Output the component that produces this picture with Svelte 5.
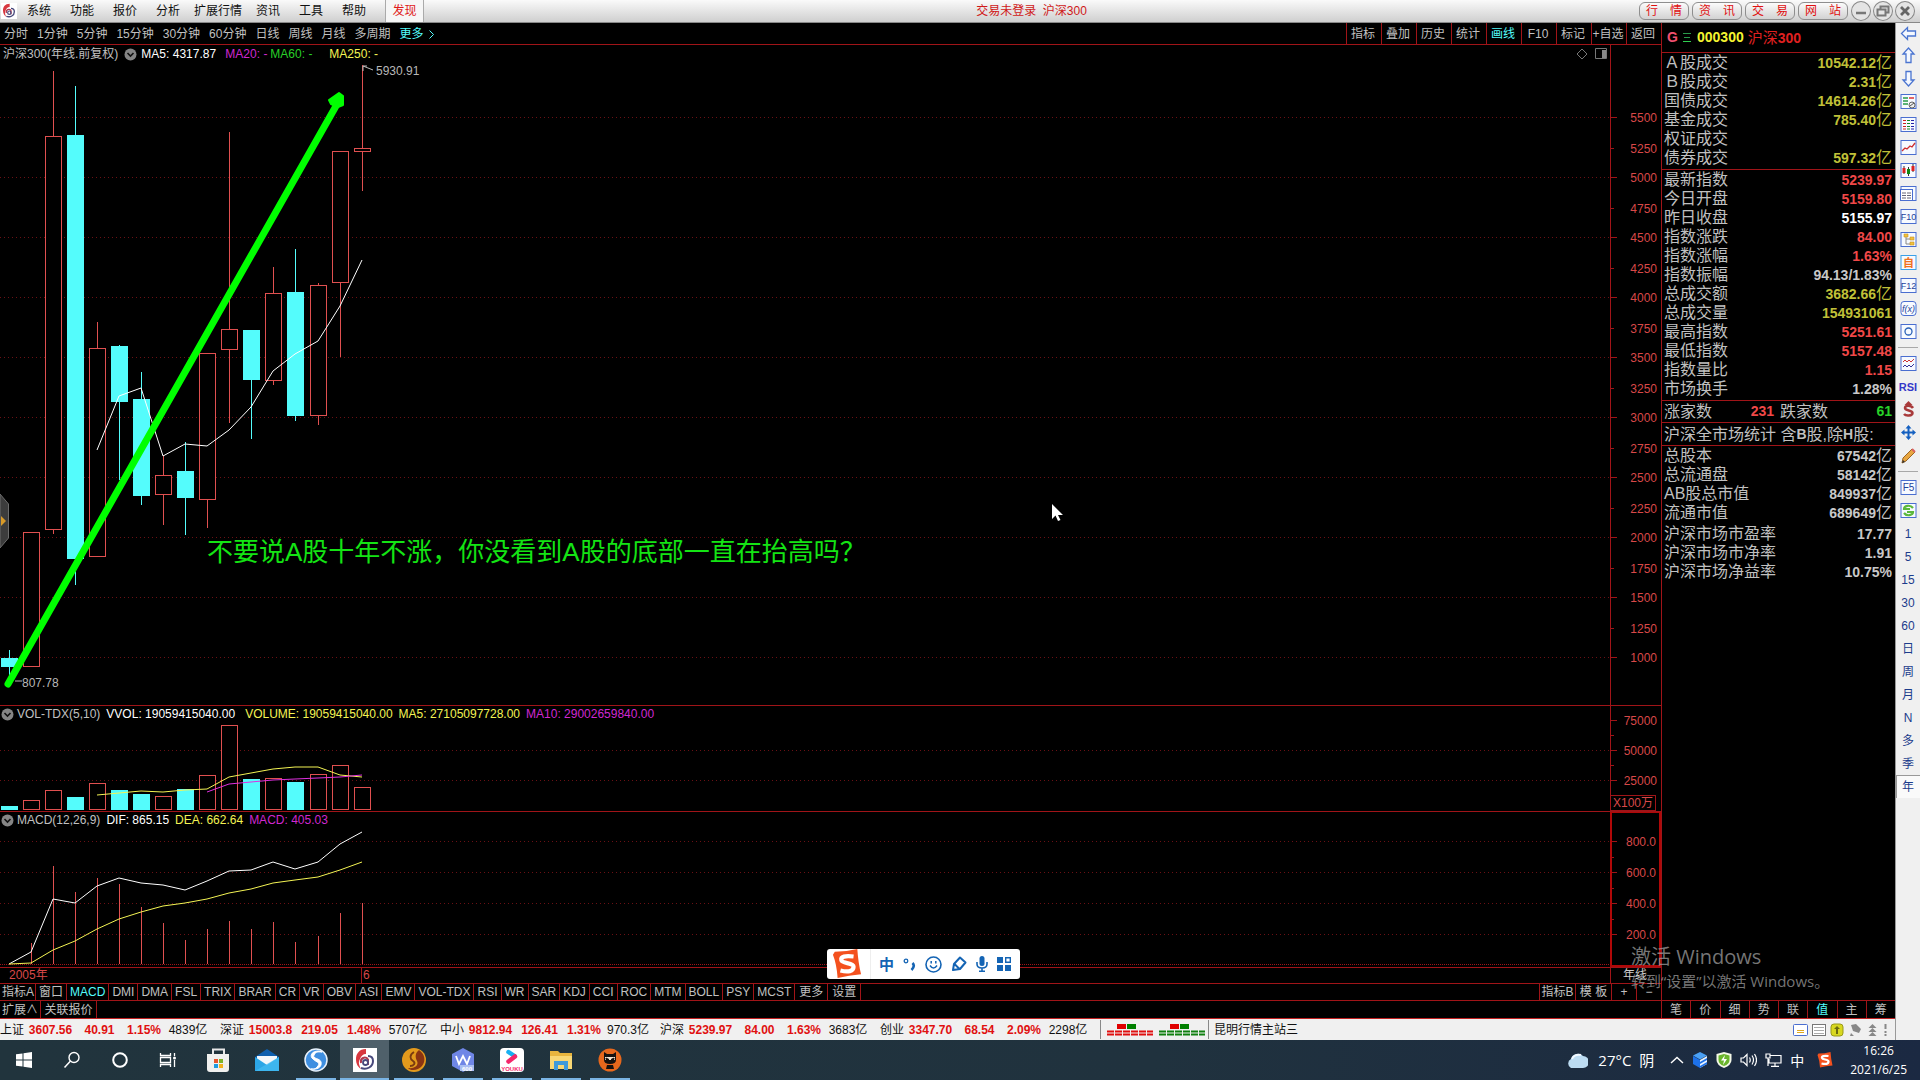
<script>
  const menus = ['系统', '功能', '报价', '分析', '扩展行情', '资讯', '工具', '帮助'];
  const links = ['行　情', '资　讯', '交　易', '网　站'];
  const periods = ['分时', '1分钟', '5分钟', '15分钟', '30分钟', '60分钟', '日线', '周线', '月线', '多周期'];
  const tools = ['指标', '叠加', '历史', '统计', '画线', 'F10', '标记', '+自选', '返回'];
  const indicators = ['指标A', '窗口', 'MACD', 'DMI', 'DMA', 'FSL', 'TRIX', 'BRAR', 'CR', 'VR', 'OBV', 'ASI', 'EMV', 'VOL-TDX', 'RSI', 'WR', 'SAR', 'KDJ', 'CCI', 'ROC', 'MTM', 'BOLL', 'PSY', 'MCST', '更多', '设置'];
  const panelTabs = ['笔', '价', '细', '势', '联', '值', '主', '筹'];

  const xs = [9, 31, 53, 75, 97, 119, 141, 163, 185, 207, 229, 251, 273, 295, 318, 340, 362];
  // up, high, body top, body bottom, low
  const candles = [
    [0, 587, 595, 604, 621], [1, 469, 469, 604, 604], [1, 8, 73, 467, 471], [0, 23, 72, 496, 522],
    [1, 259, 285, 494, 494], [0, 282, 283, 339, 417], [0, 309, 336, 433, 442], [1, 392, 412, 432, 462],
    [0, 379, 408, 435, 472], [1, 290, 290, 437, 465], [1, 69, 266, 287, 360], [0, 267, 267, 317, 376],
    [1, 204, 230, 318, 322], [0, 186, 229, 353, 358], [1, 220, 222, 353, 362], [1, 88, 88, 220, 294], [1, 2, 85, 89, 128]
  ];
  const volTops = [84, 78, 68, 75, 61, 68, 72, 74, 67, 53, 3, 57, 56, 60, 52, 43, 65];
  const macdTops = [136, 115, 38, 64, 50, 56, 79, 95, 112, 101, 93, 101, 94, 114, 108, 85, 75];

  const line = (ys) => ys.map((y, i) => `${xs[xs.length - ys.length + i]},${y}`).join(' ');
  const priceMa = line([387, 333, 325, 393, 381, 383, 367, 344, 308, 291, 278, 243, 197]);
  const volMa5 = line([73, 71, 69, 70, 68, 67, 55, 51, 47, 45, 45, 53, 55]);
  const volMa10 = line([70, 62, 60, 58, 57, 56, 55, 53]);
  const dif = line([136, 124, 71, 75, 58, 50, 55, 57, 62, 53, 43, 42, 34, 41, 34, 16, 4]);
  const dea = line([136, 135, 122, 113, 101, 91, 84, 78, 75, 71, 65, 61, 55, 52, 49, 42, 34]);

  const priceTicks = Array.from({ length: 19 }, (_, i) => ({ v: 5500 - i * 250, y: 72 + Math.floor(i * 30.05) + (i % 2) }));
  const priceGrid = Array.from({ length: 10 }, (_, i) => 54 + Math.floor(i * 60.1));

  const turnover = [['Ａ股成交', '10542.12', '亿'], ['Ｂ股成交', '2.31', '亿'], ['国债成交', '14614.26', '亿'], ['基金成交', '785.40', '亿'], ['权证成交', '', ''], ['债券成交', '597.32', '亿']]
    .map((r) => [...r, 'yellow']);
  const quote = [
    ['最新指数', '5239.97', '', 'red'], ['今日开盘', '5159.80', '', 'red'], ['昨日收盘', '5155.97', '', 'white'],
    ['指数涨跌', '84.00', '', 'red'], ['指数涨幅', '1.63%', '', 'red'], ['指数振幅', '94.13/1.83%', '', 'grey'],
    ['总成交额', '3682.66', '亿', 'yellow'], ['总成交量', '154931061', '', 'yellow'], ['最高指数', '5251.61', '', 'red'],
    ['最低指数', '5157.48', '', 'red'], ['指数量比', '1.15', '', 'red'], ['市场换手', '1.28%', '', 'grey']
  ];
  const market = [['总股本', '67542', '亿', 'grey'], ['总流通盘', '58142', '亿', 'grey'], ['AB股总市值', '849937', '亿', 'grey'], ['流通市值', '689649', '亿', 'grey']];
  const ratios = [['沪深市场市盈率', '17.77', '', 'grey'], ['沪深市场市净率', '1.91', '', 'grey'], ['沪深市场净益率', '10.75%', '', 'grey']];

  const side = ['left', 'up', 'down', 'edit', 'list', 'trend', 'kline', 'windows', 'F10', 'tree', '自', 'F12', 'fx', 'circle', '-', 'waves', 'RSI', 'dollar', 'move', 'pencil', '-', 'F5', 'refresh', '1', '5', '15', '30', '60', '日', '周', '月', 'N', '多', '季', '年'];
  const drawn = ['left', 'up', 'down', 'edit', 'list', 'trend', 'kline', 'windows', 'F10', 'tree', '自', 'F12', 'fx', 'circle', 'waves', 'dollar', 'move', 'pencil', 'F5', 'refresh'];

  const indices = [
    ['上证', '3607.56', '40.91', '1.15%', '4839亿'], ['深证', '15003.8', '219.05', '1.48%', '5707亿'],
    ['中小', '9812.94', '126.41', '1.31%', '970.3亿'], ['沪深', '5239.97', '84.00', '1.63%', '3683亿'],
    ['创业', '3347.70', '68.54', '2.09%', '2298亿']
  ];
  const apps = ['store', 'mail', 'sogou', 'tdx', 'flame', 'wps', 'youku', 'folder', 'ninja'];
</script>

{#snippet tdxLogo(size)}
  <svg width={size} height={size} viewBox="0 0 24 24" aria-hidden="true">
    <rect width="24" height="24" fill="#fff" />
    <path d="M13 1C6 1 3 6 3 11c0 5 2 8 5 10-2-4-3-7-1-10 1-3 3-5 6-5z" fill="#d8373f" />
    <path d="M8 20c6 2 12-1 12-7 0-3-2-5-5-5" fill="none" stroke="#48497c" stroke-width="2" />
    <path d="M8 15c-1-5 4-7 7-4M15 11v6" fill="none" stroke="#b03a50" stroke-width="2" />
    <circle cx="12.500" cy="14.500" r="2.500" fill="none" stroke="#48497c" stroke-width="1.800" />
  </svg>
{/snippet}

{#snippet sogouS(size)}
  <svg width={size} height={size} viewBox="0 0 32 32" aria-hidden="true">
    <path d="M3 3 Q15 3 27 0 Q28 15 31 27 Q18 28 6 31 Q5 16 1 6 Z" fill="#f4511e" />
    <path d="M23 8C14 7 9 8 10 12s13 2 13 7-6 6-14 4" fill="none" stroke="#fff" stroke-width="4.5" />
  </svg>
{/snippet}

{#snippet chevron()}
  <svg class="chev" width="13" height="13" viewBox="0 0 13 13" aria-hidden="true">
    <circle cx="6.5" cy="6.5" r="6" fill="#858585" />
    <path d="M3.5 5l3 3 3-3" fill="none" stroke="#111" stroke-width="1.6" />
  </svg>
{/snippet}

{#snippet rows(list)}
  <table>
    <tbody>
      {#each list as [label, value, unit, tone]}
        <tr><th scope="row">{label}</th><td class={tone}><b>{value}</b>{unit}</td></tr>
      {/each}
    </tbody>
  </table>
{/snippet}

{#snippet sideIcon(n)}
  <svg width="17" height="17" viewBox="0 0 17 17" aria-hidden="true">
    {#if n === 'left'}
      <path d="M1.5 8.500L7.500 2.500V6H15.500V11H7.500V14.500Z" class="arrow" />
    {:else if n === 'up'}
      <path d="M8.500 1L14 7H11V15.500H6V7H3Z" class="arrow" />
    {:else if n === 'down'}
      <path d="M8.500 16L14 10H11V1.500H6V10H3Z" class="arrow" />
    {:else if n === 'move'}
      <path d="M8.500 1l3 3.500h-6zM8.500 16l3-3.500h-6zM1 8.500l3.500-3v6zM16 8.500l-3.500-3v6z" fill="#1560c0" />
      <path d="M8.500 4v9M4 8.500h9" stroke="#1560c0" stroke-width="2" />
    {:else if n === 'pencil'}
      <path d="M3 11L12 2l3 3-9 9-4 2z" fill="#e8a640" stroke="#9a6422" />
      <path d="M12 2l3 3" stroke="#d86060" stroke-width="2" /><path d="M2 16l1-3 2 2z" fill="#333" />
    {:else if n === 'dollar'}
      <path d="M13 7C11 4 5 4 5 7s7.500 2 7.500 5S6 15.500 4 13" fill="none" stroke="#a83a3a" stroke-width="2.500" /><path d="M8.500 0l4 4h-8z" fill="#a83a3a" />
    {:else}
      <rect x="1" y="1.500" width="15" height="14" rx={n === 'fx' ? 3 : 0} fill="#f7faff" stroke={n === '自' ? '#3aa0e8' : '#4a6ed0'} />
      {#if n === 'edit'}
        <path d="M3 5h5M3 8h5M3 11h5" stroke="#2a9a4a" stroke-width="1.500" /><path d="M9 5h5" stroke="#d33" stroke-width="1.500" />
        <circle cx="12" cy="12" r="3" fill="#eee" stroke="#666" /><path d="M10 13l4-3" stroke="#555" />
      {:else if n === 'list'}
        <path d="M3 4.500h3M3 7.500h3M3 10.500h3M3 13h3" stroke="#c22" /><path d="M7 4.500h3M7 7.500h3M7 10.500h3M7 13h3" stroke="#182" /><path d="M11 4.500h3M11 7.500h3M11 10.500h3M11 13h3" stroke="#22a" />
      {:else if n === 'trend'}
        <path d="M2 12l3-3 2 1 3-3 2 1 3-4" fill="none" stroke="#d03030" stroke-width="1.300" />
      {:else if n === 'kline'}
        <path d="M4 4v8M8.500 5v9M13 2v8" stroke="#333" /><path d="M4 6v5M13 4v5" stroke="#d22" stroke-width="3" /><path d="M8.500 7v5" stroke="#181" stroke-width="3" />
      {:else if n === 'windows'}
        <rect x="0.5" y="4.5" width="12" height="11" fill="#fff" stroke="#4a6ed0" /><path d="M2 8h4M7 8h4M2 10.500h4M7 10.500h4M2 13h4M7 13h4" stroke="#667" />
      {:else if n === 'tree'}
        <path d="M6 5v8h5M6 8h5" fill="none" stroke="#888" /><path d="M4 3h4v3H4zM10 6h4v3h-4zM10 11h4v3h-4z" fill="#f2c23a" stroke="#c8922a" stroke-width=".6" />
      {:else if n === 'circle'}
        <circle cx="8.500" cy="8.500" r="3.500" fill="none" stroke="#2a62b8" stroke-width="1.300" />
      {:else if n === 'waves'}
        <path d="M3 7l2-2 2 2 2-2 2 2 3-3" fill="none" stroke="#c33" /><path d="M3 12l2-2 2 2 2-2 2 2 3-3" fill="none" stroke="#339" />
      {:else if n === 'refresh'}
        <path d="M13 6C10 2 4 4 4 7h6M4 11c3 4 9 2 9-1H7" fill="none" stroke="#5cb83c" stroke-width="2.200" />
      {:else if n === '自'}
        <text x="8.500" y="13" text-anchor="middle" class="ico orange">自</text>
      {:else if n === 'fx'}
        <text x="8.500" y="12" text-anchor="middle" class="ico it">f(x)</text>
      {:else}
        <text x="8.500" y="12" text-anchor="middle" class="ico" class:tight={n.length > 2}>{n}</text>
      {/if}
    {/if}
  </svg>
{/snippet}

<div class="app">
  <header class="titlebar">
    <nav class="menus">
      <span class="logo">{@render tdxLogo(16)}</span>
      {#each menus as m}<button class:long={m.length > 2}>{m}</button>{/each}
      <button class="discover">发现</button>
    </nav>
    <div class="title">交易未登录&nbsp; 沪深300</div>
    <div class="links">
      {#each links as l}<button>{l}</button>{/each}
    </div>
    <div class="win">
      <button aria-label="最小化"><svg width="20" height="20" viewBox="0 0 20 20"><path d="M5 12h10" stroke="#777" stroke-width="2.500" /></svg></button>
      <button aria-label="还原"><svg width="20" height="20" viewBox="0 0 20 20"><path d="M7.500 8V5.500h8v6H13M4.500 8.500h8v6h-8z" fill="none" stroke="#777" stroke-width="2" /></svg></button>
      <button aria-label="关闭"><svg width="20" height="20" viewBox="0 0 20 20"><path d="M6 6l8 8M14 6l-8 8" stroke="#666" stroke-width="2.800" /></svg></button>
    </div>
  </header>

  <div class="main">
    <div class="desk">
      <div class="upper">
        <section class="charts">
          <div class="toolbar">
            <div class="periods">
              {#each periods as p}<button>{p}</button>{/each}
              <button class="cyan more">更多<svg width="5" height="9" viewBox="0 0 5 9" aria-hidden="true"><path d="M.5.5l4 4-4 4" fill="none" stroke="currentColor" /></svg></button>
            </div>
            <div class="tools">
              {#each tools as t}<button class:cyan={t === '画线'}>{t}</button>{/each}
            </div>
          </div>

          <div class="pane price">
            <div class="plot">
              <div class="info">
                <span class="name">沪深300(年线.前复权)</span>{@render chevron()}
                <span class="ma5">MA5: 4317.87</span><span class="magenta ma20">MA20: -</span><span class="green ma60">MA60: -</span><span class="lemon">MA250: -</span>
                <svg class="corner" width="32" height="12" viewBox="0 0 32 12" aria-hidden="true"><path d="M6 1l5 5-5 5-5-5zM19.500.5h11v10h-11z" fill="none" stroke="#777" /><path d="M26 2h4v8h-4z" fill="#888" /></svg>
              </div>
              <svg width="100%" height="642">
                {#each priceGrid as y}<line class="grid" x1="0" x2="100%" y1={y + 0.5} y2={y + 0.5} />{/each}
                {#each candles as [up, hi, top, bot, lo], i}
                  <g class={up ? 'up' : 'dn'}>
                    <path d="M{xs[i] + 0.5} {hi}V{top}M{xs[i] + 0.5} {bot}V{lo}" />
                    <rect x={xs[i] - 7.5} y={top + 0.5} width="16" height={bot - top - 1} />
                  </g>
                {/each}
                <polyline class="w" points={priceMa} />
                <path d="M8 621L336 43" stroke="#0f0" stroke-width="7" stroke-linecap="round" />
                <path d="M329 37L339 30L343 33V42L338 44L331 41Z" fill="#0f0" stroke="#0f0" stroke-width="2" stroke-linejoin="round" />
                <path d="M373 7L363 3M363 8V3h4M15 618h7" fill="none" stroke="#bbb" />
                <text x="376" y="12" class="tag">5930.91</text>
                <text x="22" y="624" class="tag">807.78</text>
                <text x="207" y="498" class="note">不要说A股十年不涨，你没看到A股的底部一直在抬高吗？</text>
              </svg>
            </div>
            <svg class="axis" height="660">
              {#each priceTicks as t, i}
                <path d="M0 {t.y + 0.5}h{i % 2 ? 3 : 6}" /><text x="46" y={t.y + 5}>{t.v}</text>
              {/each}
            </svg>
          </div>

          <div class="pane">
            <div class="plot">
              <div class="info small">{@render chevron()}<span class="name">VOL-TDX(5,10)</span><span class="vv">VVOL: 19059415040.00</span><span class="lemon">VOLUME: 19059415040.00</span><span class="lemon">MA5: 27105097728.00</span><span class="magenta">MA10: 29002659840.00</span></div>
              <svg width="100%" height="89">
                <line class="grid" x1="0" x2="100%" y1="28.5" y2="28.5" /><line class="grid" x1="0" x2="100%" y1="58.5" y2="58.5" />
                {#each volTops as y, i}
                  <rect class={candles[i][0] ? 'up' : 'dn'} x={xs[i] - 7.5} y={y + 0.5} width="16" height={87 - y} />
                {/each}
                <polyline class="y" points={volMa5} /><polyline class="m" points={volMa10} />
              </svg>
            </div>
            <div class="axisbox">
              <svg class="axis" height="89">
                <path d="M0 14.5h6M0 29.5h3M0 44.5h6M0 59.500h3M0 74.500h6" />
                <text x="46" y="19">75000</text><text x="46" y="49">50000</text><text x="46" y="79">25000</text>
              </svg>
              <span class="unit">X100万</span>
            </div>
          </div>

          <div class="pane">
            <div class="plot">
              <div class="info small">{@render chevron()}<span class="name">MACD(12,26,9)</span><span>DIF: 865.15</span><span class="lemon">DEA: 662.64</span><span class="magenta">MACD: 405.03</span></div>
              <svg width="100%" height="139">
                {#each [13, 44, 75, 106] as y}<line class="grid" x1="0" x2="100%" y1={y + 0.5} y2={y + 0.5} />{/each}
                <line class="zero" x1="0" x2="100%" y1="136.5" y2="136.5" />
                {#each macdTops as y, i}<path class="up" d="M{xs[i] + 0.5} 136V{y}" />{/each}
                <polyline class="w" points={dif} /><polyline class="y" points={dea} />
              </svg>
            </div>
            <svg class="axis strong" height="155">
              <path d="M0 28.500h5M0 44.500h2M0 59.500h5M0 75.500h2M0 90.500h5M0 106.500h2M0 121.500h5" />
              <text x="44" y="33">800.0</text><text x="44" y="64">600.0</text><text x="44" y="95">400.0</text><text x="44" y="126">200.0</text>
            </svg>
          </div>

          <div class="dates"><span class="y1">2005年</span><span class="y2">6</span><span class="cycle">年线</span></div>
          <div class="tabs">
            {#each indicators as t}<button class:cyan={t === 'MACD'} class:han={t === '更多' || t === '设置'}>{t}</button>{/each}
            <span class="fill"></span>
            <button class="wide">指标B</button><button class="wide">模 板</button><button class="pm">+</button><button class="pm">−</button>
          </div>
        </section>

        <aside class="panel">
          <h1><span class="g">G</span><svg width="8" height="11" viewBox="0 0 8 11" aria-hidden="true"><path d="M0 1.500h8M1 5.500h6" stroke="#2a9a4a" /><path d="M0 9.500h8" stroke="#2fd050" /></svg><span class="code">000300</span><span class="idx">沪深<b>300</b></span></h1>
          <div class="group">{@render rows(turnover)}</div>
          <div class="group">{@render rows(quote)}</div>
          <div class="line"><span>涨家数</span><b class="red">231</b><span>跌家数</span><b class="lime">61</b></div>
          <div class="line last">沪深全市场统计&nbsp;含<b>B</b>股,除<b>H</b>股:</div>
          <div class="group open">{@render rows(market)}{@render rows(ratios)}</div>
        </aside>
      </div>
      <div class="bottom">
        <button class="ext">扩展∧</button><button class="rel">关联报价</button><span class="fill"></span>
        <div class="ptabs">{#each panelTabs as t}<button class:cyan={t === '值'}>{t}</button>{/each}</div>
      </div>
      <footer class="status">
        {#each indices as [n, v, c, p, a]}
          <div class="index"><span>{n}</span><b>{v}</b><b>{c}</b><b>{p}</b><span>{a}</span></div>
        {/each}
        <div class="meter">
          <svg width="98" height="12" viewBox="0 0 98 12" aria-hidden="true">
            <path d="M10 0h9v5h-9zM63 0h9v5h-9z" fill="#e00000" /><path d="M20 0h9v5h-9zM73 0h9v5h-9z" fill="#008000" />
            <path d="M0 7.500h46M0 10.500h46" stroke="#e01010" stroke-width="2" stroke-dasharray="7 1" /><path d="M52 7.500h46M52 10.500h46" stroke="#108010" stroke-width="2" stroke-dasharray="7 1" />
          </svg>
        </div>
        <span class="server">昆明行情主站三</span>
        <svg class="sicons" width="96" height="14" viewBox="0 0 96 14" aria-hidden="true">
          <rect x=".5" y="1.500" width="14" height="11" rx="1" fill="#fff" stroke="#4a6ed0" /><path d="M4 7.500h7M4 9.500h7" stroke="#e0a820" />
          <rect x="19.500" y="1.500" width="13" height="11" fill="#fff" stroke="#777" /><path d="M21 4.500h10M21 7.500h10M21 10.500h10" stroke="#aaa" />
          <rect x="38" y="1" width="12" height="12" rx="3" fill="#d8d820" stroke="#99991a" /><path d="M44 3l3 3h-2v5h-2V6h-2z" fill="#6a6a10" />
          <path d="M58 2l5-1 5 5-2 4-6-2zM58 10l3 3h-4z" fill="#888" />
          <path d="M79.500 1l4 4h-8zM79.500 5l4 4h-8zM79.500 9l4 4h-8z" fill="#888" />
          <path d="M92.500 1v5M92.500 8v2M92.500 11v2" stroke="#888" stroke-width="2" />
        </svg>
      </footer>
    </div>

    <nav class="side">
      {#each side as s}
        {#if s === '-'}<hr />
        {:else if drawn.includes(s)}<button aria-label={s}>{@render sideIcon(s)}</button>
        {:else}<button class:rsi={s === 'RSI'} class:sel={s === '年'}>{s}</button>{/if}
      {/each}
    </nav>
  </div>

  <footer class="taskbar">
    <button class="sys" aria-label="开始"><svg width="16" height="16" viewBox="0 0 16 16"><path d="M0 2.300L6.500 1.400V7.500H0zM7.500 1.200L16 0V7.500H7.500zM0 8.500H6.500V14.600L0 13.700zM7.500 8.500H16V16L7.500 14.800z" fill="#fff" /></svg></button>
    <button class="sys" aria-label="搜索"><svg width="18" height="18" viewBox="0 0 18 18"><circle cx="11" cy="6.500" r="5" fill="none" stroke="#fff" stroke-width="1.400" /><path d="M7.500 10L1.500 16.500" stroke="#fff" stroke-width="1.500" /></svg></button>
    <button class="sys" aria-label="Cortana"><svg width="18" height="18" viewBox="0 0 18 18"><circle cx="9" cy="9" r="6.800" fill="none" stroke="#fff" stroke-width="2" /></svg></button>
    <button class="sys" aria-label="任务视图"><svg width="18" height="18" viewBox="0 0 18 18"><path d="M1.500 2v2.500h10V2M1.500 16v-2.500h10V16M1.500 6.500h10v5h-10zM15.500 2v3M15.500 9v7" fill="none" stroke="#fff" stroke-width="1.300" /><circle cx="15.500" cy="7" r="1.500" fill="#fff" /></svg></button>
    <div class="apps">
      {#each apps as a, i}
        <button class:active={a === 'tdx'} class:run={i > 1} aria-label={a}>
          {#if a === 'tdx'}{@render tdxLogo(24)}
          {:else}
            <svg width="24" height="24" viewBox="0 0 24 24">
              {#if a === 'store'}
                <path d="M7 6V1.500h11V6" fill="none" stroke="#e8e8e8" stroke-width="2" /><path d="M1 6h22v15q0 3-3 3H4q-3 0-3-3z" fill="#f0f0ee" />
                <path d="M8 11h4v4H8z" fill="#e8562c" /><path d="M13 11h4v4h-4z" fill="#7cb52a" /><path d="M8 16h4v4H8z" fill="#1d9be0" /><path d="M13 16h4v4h-4z" fill="#f2b21e" />
              {:else if a === 'mail'}
                <path d="M0 9L12 1l12 8v14H0z" fill="#0f5fae" /><path d="M2 8h20v6l-10 4-10-4z" fill="#f4f7fa" /><path d="M0 9l12 8 12-8v14H0z" fill="#2ca6e6" /><path d="M0 23l24-14v14z" fill="#45bdf2" opacity=".7" />
              {:else if a === 'sogou'}
                <circle cx="12" cy="12" r="11" fill="#3f8fe0" stroke="#e8f2fc" stroke-width="1.500" />
                <path d="M18 4C11 1 5 6 8 10s9 4 6 8-5 3-7 3c8 1 11-3 10-7s-9-3-7-7 5-3 8-3z" fill="#fff" stroke="#fff" />
              {:else if a === 'flame'}
                <circle cx="12" cy="12" r="12" fill="#e39a1c" /><path d="M17 2c6 4 7 11 3 16s-12 5-14 2c7 1 11-3 9-7s-2-8 2-11z" fill="#8a3412" /><path d="M12 4C7 7 8 11 11 13s1 5-3 5" fill="none" stroke="#7a3a10" stroke-width="1.800" />
              {:else if a === 'wps'}
                <path d="M12 0l11 6v12l-11 6L1 18V6z" fill="#6f86e6" /><path d="M5 8l3 8 4-8 4 8 3-8" fill="none" stroke="#fff" stroke-width="1.800" /><rect x="9" y="17" width="14" height="6" fill="#a8bdf2" /><text x="16" y="22.500" text-anchor="middle" class="tiny w6">600</text>
              {:else if a === 'youku'}
                <rect width="24" height="24" rx="4" fill="#fff" /><path d="M8.500 4l6 4" stroke="#18b0f2" stroke-width="4.500" stroke-linecap="round" /><path d="M15 8.500l-6.500 5" stroke="#f5276b" stroke-width="4.500" stroke-linecap="round" /><text x="12" y="22.500" text-anchor="middle" class="tiny yk">YOUKU</text>
              {:else if a === 'folder'}
                <path d="M1 3h8l2 2h12v16H1z" fill="#e8b53e" /><path d="M1 8h22v13H1z" fill="#f8d775" /><path d="M5 13h14v9h-4v-5H9v5H5z" fill="#3f9ada" />
              {:else}
                <circle cx="12" cy="12" r="11.500" fill="#e8681c" /><path d="M6 4l3 2h6l3-2v8q0 4-6 4t-6-4z" fill="#161210" /><path d="M7 9h10v3H7z" fill="#f4e4d0" /><path d="M8 10l3 1.500H8zM16 10l-3 1.500h3z" fill="#161210" stroke="#161210" /><path d="M9 17h6l1 4H8z" fill="#161210" />
              {/if}
            </svg>
          {/if}
        </button>
      {/each}
    </div>
    <span class="fill"></span>
    <div class="tray">
      <svg width="22" height="16" viewBox="0 0 22 16" aria-hidden="true"><path d="M5 16a5 5 0 0 1 0-9A7 6.500 0 0 1 17 4a6 6 0 0 1 0 12z" fill="#bcdcf2" /><path d="M6 7a7 6 0 0 1 9-4" stroke="#f2f9ff" stroke-width="2" fill="none" /></svg>
      <span class="temp">27°C&nbsp; 阴</span>
      <svg width="14" height="8" viewBox="0 0 14 8" aria-hidden="true"><path d="M1 7l6-5.500L13 7" fill="none" stroke="#fff" stroke-width="1.400" /></svg>
      <svg width="16" height="16" viewBox="0 0 16 16" aria-hidden="true"><path d="M8 0l7 3.500-7 4-7-4z" fill="#4aa0f5" /><path d="M1 4l7 4v8l-7-4z" fill="#1d70e8" /><path d="M15 4L8 8v8l7-4z" fill="#e8f3ff" /><path d="M8 10l7-4v2l-7 4zM8 14l7-4v2l-7 4z" fill="#1d70e8" /></svg>
      <svg width="16" height="16" viewBox="0 0 16 16" aria-hidden="true"><path d="M8 0l7.500 2v6q0 5-7.500 8Q.5 13 .5 8V2z" fill="#f4f8e8" /><path d="M8 2l5.500 1.500V8q0 4-5.500 6Q2.500 12 2.500 8V3.500z" fill="#6ab52c" /><path d="M9 3L5 8.500h3L7 13l4-6H8z" fill="#fff" /></svg>
      <svg width="17" height="16" viewBox="0 0 17 16" aria-hidden="true"><path d="M1 6h2.500L7 2.500v11L3.500 10H1zM9.500 5.500q1.500 2.500 0 5M12 3.500q3 4.500 0 9M14.500 2q4 6 0 12" fill="none" stroke="#fff" stroke-width="1.200" /></svg>
      <svg width="17" height="14" viewBox="0 0 17 14" aria-hidden="true"><path d="M5 2.500h11v7.500H4V6M10 10v3M6 13.300h8M1 1h4v4H1zM3 5v8" fill="none" stroke="#fff" stroke-width="1.200" /></svg>
      <span class="zh">中</span>
      {@render sogouS(16)}
      <div class="clock"><span>16:26</span><span>2021/6/25</span></div>
    </div>
  </footer>

  <button class="handle" aria-label="展开"><svg width="9" height="56" viewBox="0 0 9 56"><path d="M0 1L8.500 11V45L0 55z" fill="#3c3c3c" stroke="#6c6c6c" /><path d="M1 23l5 5-5 5z" fill="#d89a28" /></svg></button>

  <div class="ime">
    {@render sogouS(30)}
    <i></i>
    <button>中</button>
    <svg width="13" height="14" viewBox="0 0 13 14" aria-hidden="true"><circle cx="3" cy="4" r="1.800" fill="none" stroke="#1464b4" stroke-width="1.300" /><path d="M9.500 6q3 3-1 7" fill="none" stroke="#1464b4" stroke-width="2.500" /></svg>
    <svg width="17" height="17" viewBox="0 0 17 17" aria-hidden="true"><circle cx="8.500" cy="8.500" r="7.500" fill="none" stroke="#1464b4" stroke-width="1.600" /><path d="M5 9.500q3.500 5 7 0M6.200 5v2.500M10.800 5v2.500" fill="none" stroke="#1464b4" stroke-width="1.500" /></svg>
    <svg width="16" height="16" viewBox="0 0 16 16" aria-hidden="true"><path d="M2 14l1-6 6-6.500 5.500 5L9 13zM3.500 8l5 5" fill="none" stroke="#1464b4" stroke-width="2" stroke-linejoin="round" /></svg>
    <svg width="12" height="16" viewBox="0 0 12 16" aria-hidden="true"><rect x="3.500" width="5" height="10" rx="2.500" fill="#1464b4" /><path d="M1 6v2q0 4 5 4t5-4V6M6 12v3.500M3 15.300h6" fill="none" stroke="#1464b4" stroke-width="1.600" /></svg>
    <svg width="14" height="14" viewBox="0 0 14 14" aria-hidden="true"><path d="M0 0h6v6H0zM0 8h6v6H0zM8 8h6v6H8z" fill="#1464b4" /><path d="M8.700.7h4.600v4.600H8.700z" fill="none" stroke="#1464b4" stroke-width="1.400" /></svg>
  </div>

  <div class="activate"><p class="big">激活 Windows</p><p>转到“设置”以激活 Windows。</p></div>

  <svg class="cursor" width="12" height="19" viewBox="0 0 12 19" aria-hidden="true"><path d="M0 0v15l3.500-3.500L6 17l2.500-1-2.500-5h5z" fill="#fff" /></svg>
</div>

<style>
  :global(body) { margin: 0; background: #000; }
  .app {
    --line: #a01418;
    position: relative;
    display: flex;
    flex-direction: column;
    min-height: 100vh;
    background: #000;
    color: #c0c0c0;
    font: 12px/14px 'Liberation Sans', 'Noto Sans CJK SC', sans-serif;
    white-space: nowrap;
  }
  .app * { box-sizing: border-box; }
  button { margin: 0; padding: 0; border: 0; background: none; color: inherit; font: inherit; }
  svg { display: block; flex: none; }
  .fill { flex: 1; }
  .cyan { color: #54fcfc; }
  .red { color: #f04848; }
  .yellow { color: #c0c038; }
  .white { color: #fff; }
  .grey { color: #c8c8c8; }
  .lime { color: #28d028; }
  .lemon { color: #f4f454; }
  .magenta { color: #d028d0; }
  .green { color: #28d028; }

  .titlebar { display: flex; align-items: center; height: 23px; background: linear-gradient(#fafafa, #cfcfcf); border-bottom: 1px solid #888; color: #111; }
  .menus { display: flex; align-items: center; height: 100%; gap: 19px; }
  .menus .long { margin: 0 -5px; }
  .logo { margin: 0 -9px 0 1px; }
  .menus .discover { height: 100%; width: 39px; background: #f6f6f6; border: solid #aaa; border-width: 0 1px; color: #e01818; }
  .title { flex: 1; text-align: center; color: #d01818; }
  .links { display: flex; gap: 3px; margin-right: 3px; }
  .links button { width: 50px; height: 18px; border: 1px solid #8e8e8e; border-radius: 6px; background: linear-gradient(#fbfbfb, #d2d2d2); color: #e01010; }
  .win { display: flex; gap: 2px; margin-right: 5px; }
  .win button { width: 20px; height: 20px; border-radius: 50%; background: #e4e4e4; box-shadow: inset 0 0 0 1px #888; }

  .main { flex: 1; display: flex; }
  .desk { flex: 1; min-width: 0; display: flex; flex-direction: column; border-right: 1px solid #999; }
  .upper { flex: 1; display: flex; }
  .charts { flex: 1; min-width: 0; display: flex; flex-direction: column; }
  .toolbar { display: flex; justify-content: space-between; height: 22px; border-bottom: 1px solid var(--line); }
  .periods { display: flex; align-items: center; gap: 9px; padding: 1px 0 0 4px; }
  .more { display: flex; align-items: center; gap: 5px; }
  .tools { display: flex; }
  .tools button { width: 35px; padding: 1px 2px 0 0; border-left: 1px solid var(--line); }

  .pane { display: grid; grid-template-columns: minmax(0, 1fr) 51px; border-bottom: 1px solid var(--line); }
  .price { flex: 1; }
  .info { display: flex; align-items: center; height: 18px; padding-left: 3px; color: #fff; }
  .info .name { color: #c0c0c0; }
  .info .chev { margin: 0 4px 0 6px; }
  .ma5 { width: 84px; }
  .ma20 { width: 45px; }
  .ma60 { width: 59px; }
  .corner { margin: 0 2px 0 auto; }
  .info.small { height: 16px; padding-left: 0; gap: 6px; }
  .info.small .chev { margin: 0 -3px 0 1px; }
  .small .vv { margin-right: 4px; }
  .grid { stroke: #6a1014; stroke-dasharray: 1 3; }
  .zero { stroke: #a01418; stroke-dasharray: 1 1; }
  .up, .up * { fill: #000; stroke: #e05050; }
  .dn, .dn * { fill: #54fcfc; stroke: #54fcfc; }
  polyline { fill: none; }
  .w { stroke: #fff; }
  .y { stroke: #f4f454; }
  .m { stroke: #e030e0; }
  .tag { fill: #b8b8b8; }
  .note { fill: #14e414; font-size: 26px; }
  .axis { width: 51px; border-left: 1px solid var(--line); }
  .axis path { stroke: var(--line); }
  .axis text { fill: #d84848; text-anchor: end; }
  .strong { border: 2px solid #b00808; border-top-width: 1px; }
  .axisbox { display: flex; flex-direction: column; align-items: flex-start; }
  .unit { height: 16px; width: 46px; padding-left: 2px; border: 1px solid var(--line); color: #d84848; line-height: 15px; }

  .dates { display: flex; height: 16px; line-height: 15px; border-bottom: 1px solid var(--line); color: #d84848; }
  .y1 { width: 361px; padding-left: 9px; }
  .y2 { flex: 1; border-left: 1px solid var(--line); padding-left: 1px; }
  .cycle { width: 51px; padding-left: 12px; border-left: 1px solid var(--line); color: #ccc; }
  .tabs { display: flex; height: 17px; border-bottom: 1px solid var(--line); }
  .tabs button { padding: 0 3px; border-right: 1px solid var(--line); }
  .tabs button:first-child { padding: 0 1px 0 2px; }
  .tabs .han { padding: 0 4px; }
  .tabs .han:first-of-type { padding: 0 4px; }
  .tabs .wide { width: 36px; padding: 0; border-right: 0; border-left: 1px solid var(--line); }
  .tabs .pm { width: 25px; border-left: 1px solid var(--line); border-right: 0; }

  .panel { width: 234px; border-left: 1px solid var(--line); border-bottom: 1px solid var(--line); font-size: 16px; line-height: 19px; }
  .panel h1 { display: flex; align-items: center; height: 30px; margin: 0; padding: 0 5px; border-bottom: 1px solid var(--line); font-size: 14px; font-weight: 400; }
  .g { width: 16px; color: #f05070; font-weight: 700; }
  .code { margin: 0 4px 0 6px; color: #f4f430; font-weight: 700; }
  .idx { color: #e02020; font-size: 15px; }
  .group { border-bottom: 1px solid var(--line); padding-bottom: 2px; }
  .open { border: 0; }
  table { width: 100%; border-collapse: collapse; }
  .open table + table { margin-top: 2px; }
  tr { height: 19px; }
  th, td { padding: 0 2px; font-weight: 400; text-align: left; line-height: 16px; }
  td { text-align: right; padding-right: 3px; }
  .panel b { font-size: 14px; }
  .line { display: flex; align-items: center; height: 22px; padding: 0 3px 0 2px; border-bottom: 1px solid var(--line); }
  .line.last { height: 23px; }
  .line .red { margin: 0 6px 0 auto; }
  .line .lime { width: 64px; text-align: right; }

  .bottom { display: flex; height: 18px; border-bottom: 1px solid #c02020; }
  .ext { width: 41px; border-right: 1px solid var(--line); }
  .rel { width: 56px; border-right: 1px solid var(--line); }
  .ptabs { display: flex; width: 234px; }
  .ptabs button { flex: 1; border-left: 1px solid var(--line); }
  .status { display: flex; align-items: center; height: 21px; background: #f0f0f0; color: #111; }
  .index { display: grid; grid-template-columns: 27px 47px 51px 38px 50px; width: 220px; text-align: center; }
  .index :first-child { text-align: left; }
  .index b { color: #e01010; }
  .meter { display: flex; align-items: center; height: 19px; padding: 0 3px 0 6px; border: solid #888; border-width: 0 1px; }
  .server { padding-left: 5px; flex: 1; }
  .sicons { margin-right: 6px; }

  .side { display: flex; flex-direction: column; width: 24px; background: #f0f0f0; color: #1c3c8c; }
  .side button { display: flex; align-items: center; justify-content: center; height: 23px; font-size: 12px; }
  .side button:first-child { height: 21px; }
  .side .rsi { color: #3438c8; font-weight: 700; font-size: 11px; }
  .side .sel { background: #fafafa; box-shadow: inset 1px 1px 0 #999; }
  hr { width: 20px; height: 1px; margin: 4px auto; border: 0; background: #a8a8a8; }
  .arrow { fill: #f4f8ff; stroke: #4a74d0; stroke-width: 1.3; }
  .ico { font: 10px 'Liberation Sans', sans-serif; fill: #24429c; }
  .tight { font-size: 9px; }
  .orange { font: bold 11px 'Noto Sans CJK SC', sans-serif; fill: #f07020; }
  .it { font-size: 9px; font-style: italic; }

  .taskbar { display: flex; align-items: center; height: 40px; background: linear-gradient(90deg, #21343d, #20323e 60%, #1b2942); color: #fff; }
  .taskbar button { display: flex; align-items: center; justify-content: center; height: 40px; width: 49px; }
  .taskbar .sys { width: 48px; }
  .apps { display: flex; padding-left: 1px; }
  .run { background: linear-gradient(#7ab4e4, #7ab4e4) center bottom / 40px 2px no-repeat; }
  .taskbar .active { background: linear-gradient(#7ab4e4, #7ab4e4) center bottom / 49px 2px no-repeat #4f606a; }
  .tiny { font: bold 6px 'Liberation Sans', sans-serif; fill: #fff; }
  .yk { fill: #f5276b; }
  .tray { display: flex; align-items: center; gap: 8px; font: 15px/19px 'Open Sans', 'Noto Sans CJK SC', sans-serif; }
  .temp { margin: 0 8px 0 2px; }
  .zh { margin-right: 5px; font-size: 14px; }
  .clock { display: flex; flex-direction: column; align-items: center; padding: 0 13px 0 9px; font-size: 12px; }

  .handle { position: absolute; left: 0; top: 493px; }
  .ime { position: absolute; left: 827px; top: 949px; display: flex; align-items: center; gap: 9px; width: 193px; height: 30px; padding-left: 5px; background: #fff; border-radius: 3px; }
  .ime i { width: 1px; height: 30px; margin: 0 -1px; background: #eee; }
  .ime button { color: #1464b4; font: bold 15px/18px 'Noto Sans CJK SC', sans-serif; }
  .activate { position: absolute; left: 1631px; top: 943px; color: rgba(165, 165, 165, 0.72); font: 15px/22px 'Open Sans', 'Noto Sans CJK SC', sans-serif; pointer-events: none; }
  .activate p { margin: 0; }
  .activate .big { font-size: 20px; line-height: 27px; }
  .cursor { position: absolute; left: 1052px; top: 504px; pointer-events: none; }
</style>
